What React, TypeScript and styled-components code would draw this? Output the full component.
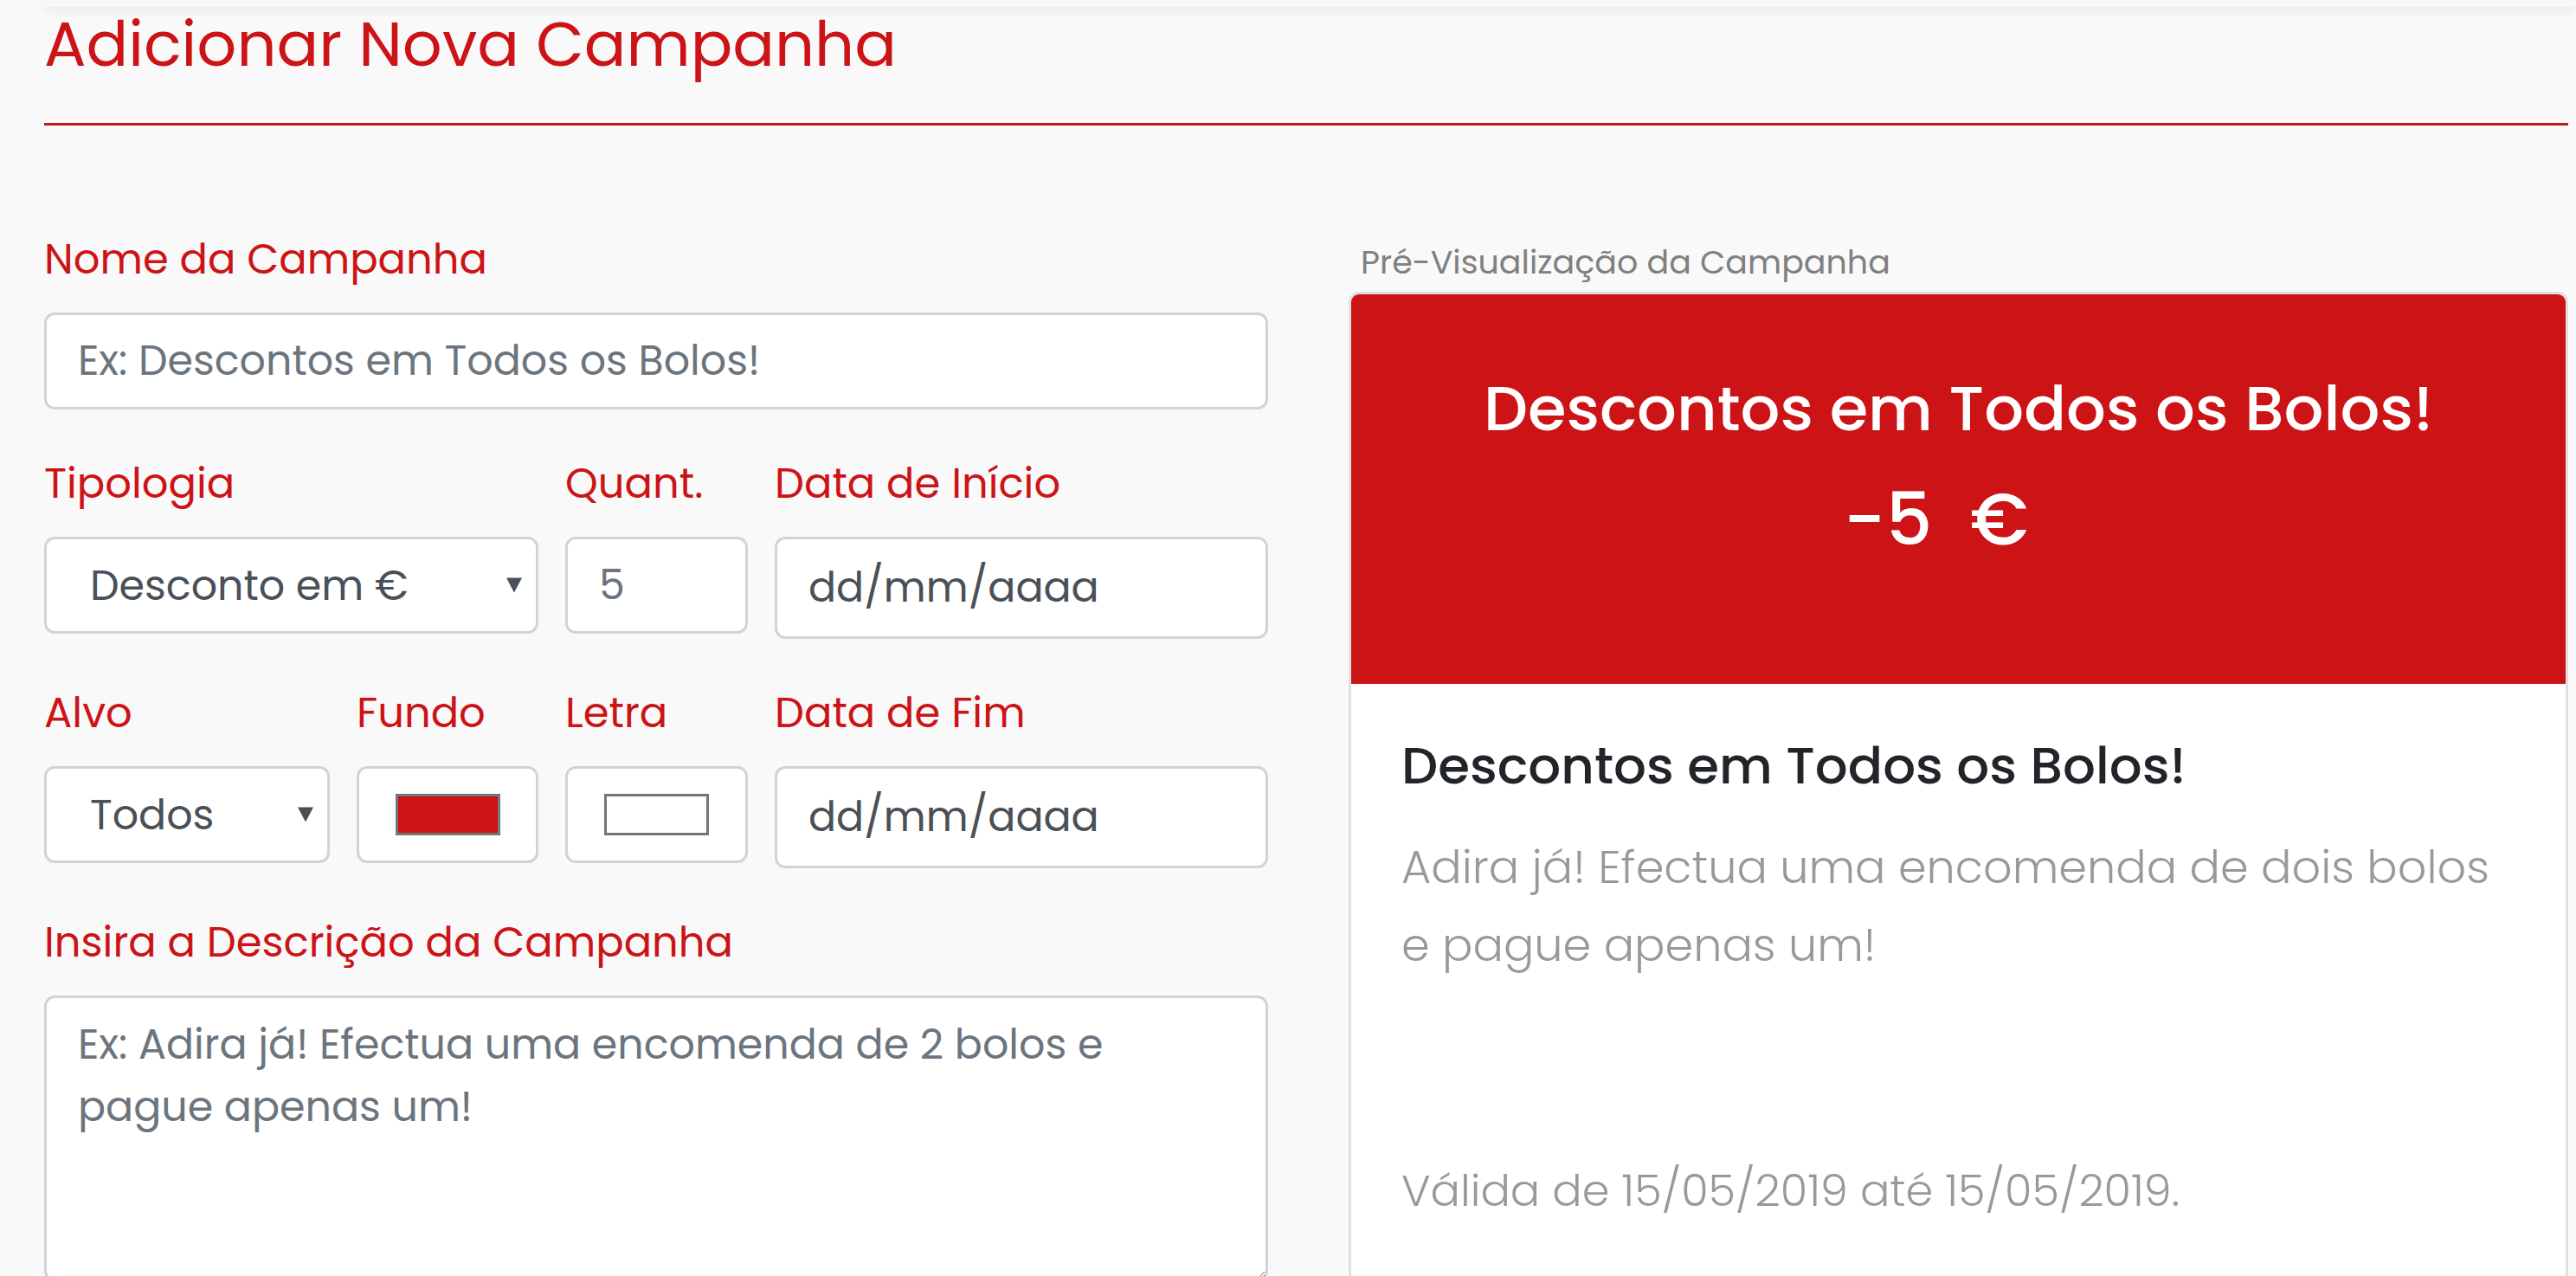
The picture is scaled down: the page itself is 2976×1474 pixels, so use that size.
import React from "react";
import styled, { createGlobalStyle, css } from "styled-components";

const RED = "#cc1316";
const FONT = `"Poppins", Inter, "Noto Sans", sans-serif`;

const GlobalStyle = createGlobalStyle`
  html, body { margin: 0; padding: 0; }
  body { background: #f9f9f9; font-family: ${FONT}; }
  *, *::before, *::after { box-sizing: border-box; }
`;

const Page = styled.div`
  padding-left: 51px;
  min-height: 1474px;
  overflow: hidden;
`;

const TopBar = styled.div`
  height: 8px;
  background: #f7f8fa;
  box-shadow: 0 4px 12px rgba(0, 0, 0, 0.08);
`;

const Content = styled.main`
  padding-right: 9px;
`;

const Title = styled.h1`
  margin: 0;
  font-size: 72px;
  line-height: 86px;
  font-weight: 400;
  color: ${RED};
`;

const Rule = styled.hr`
  margin: 48px 0 0;
  border: 0;
  height: 3px;
  background: #c41417;
`;

const Columns = styled.div`
  display: grid;
  grid-template-columns: 1414px 1fr;
  column-gap: 93px;
  align-items: start;
`;

const FormColumn = styled.form`
  padding-top: 127px;
  display: flex;
  flex-direction: column;
  gap: 58px;
`;

const Field = styled.div`
  display: flex;
  flex-direction: column;
  min-width: 0;
`;

const FieldRow = styled.div<{ $cols: string }>`
  display: grid;
  grid-template-columns: ${(p) => p.$cols};
  column-gap: 31px;
  align-items: start;
`;

const Label = styled.label`
  display: block;
  font-size: 48px;
  line-height: 56px;
  color: ${RED};
  margin-bottom: 33px;
  white-space: nowrap;
`;

const controlBase = css`
  display: block;
  width: 100%;
  background: #fff;
  border: 3px solid #ced4da;
  border-radius: 12px;
  font-family: ${FONT};
  font-size: 47.5px;
  color: #495057;
  outline: none;
  margin: 0;
`;

const TextInput = styled.input<{ $h?: number; $ph?: string }>`
  ${controlBase};
  height: ${(p) => p.$h ?? 112}px;
  padding: 0 36px;
  &::placeholder {
    color: ${(p) => p.$ph ?? "#6c757d"};
    opacity: 1;
  }
`;

const SelectWrap = styled.div`
  position: relative;
`;

const Select = styled.select`
  ${controlBase};
  height: 112px;
  padding: 0 60px 0 50px;
  appearance: none;
  -webkit-appearance: none;
`;

const Arrow = styled.span`
  position: absolute;
  right: 19px;
  top: 50%;
  transform: translateY(-50%);
  width: 0;
  height: 0;
  border-left: 9px solid transparent;
  border-right: 9px solid transparent;
  border-top: 17px solid #495057;
  pointer-events: none;
`;

const ColorBox = styled.div`
  height: 112px;
  background: #fff;
  border: 3px solid #ced4da;
  border-radius: 12px;
  display: flex;
  align-items: center;
  justify-content: center;
`;

const Swatch = styled.span<{ $color: string }>`
  width: 121px;
  height: 48px;
  border: 3px solid #767676;
  background: ${(p) => p.$color};
`;

const TextArea = styled.textarea`
  ${controlBase};
  height: 330px;
  padding: 18px 36px;
  line-height: 72px;
  resize: vertical;
  &::placeholder {
    color: #6c757d;
    opacity: 1;
  }
`;

const PreviewColumn = styled.section`
  padding-top: 134px;
`;

const PreviewLabel = styled.div`
  font-size: 38px;
  line-height: 48px;
  color: #808080;
  margin: 0 0 10px 14px;
`;

const Card = styled.div`
  background: #fff;
  border: 3px solid #e0e0e0;
  border-radius: 12px;
  overflow: hidden;
`;

const CardHeader = styled.div<{ $bg: string; $fg: string }>`
  height: 450px;
  padding-top: 90px;
  background: ${(p) => p.$bg};
  color: ${(p) => p.$fg};
  text-align: center;
`;

const HeaderTitle = styled.h3`
  margin: 0;
  font-size: 72px;
  line-height: 84px;
  font-weight: 500;
`;

const HeaderValue = styled.div`
  margin-top: 36px;
  padding-right: 52px;
  font-size: 84px;
  line-height: 100px;
  font-weight: 500;
  white-space: pre;
`;

const CardBody = styled.div`
  padding: 59px 60px 60px 58px;
`;

const BodyTitle = styled.h5`
  margin: 0 0 36px;
  font-size: 59.5px;
  line-height: 72px;
  font-weight: 500;
  color: #212529;
`;

const BodyText = styled.p<{ $size: number; $minH?: number }>`
  margin: 0;
  font-size: ${(p) => p.$size}px;
  line-height: 90px;
  font-weight: 300;
  color: #999999;
  min-height: ${(p) => p.$minH ?? 0}px;
`;

export default function App() {
  return (
    <>
      <GlobalStyle />
      <Page>
        <TopBar />
        <Content>
          <Title>Adicionar Nova Campanha</Title>
          <Rule />
          <Columns>
            <FormColumn onSubmit={(e) => e.preventDefault()}>
              <Field>
                <Label>Nome da Campanha</Label>
                <TextInput type="text" placeholder="Ex: Descontos em Todos os Bolos!" />
              </Field>

              <FieldRow $cols="571px 211px 1fr">
                <Field>
                  <Label>Tipologia</Label>
                  <SelectWrap>
                    <Select defaultValue="eur">
                      <option value="eur">Desconto em €</option>
                      <option value="pct">Desconto em %</option>
                    </Select>
                    <Arrow />
                  </SelectWrap>
                </Field>
                <Field>
                  <Label>Quant.</Label>
                  <TextInput type="text" placeholder="5" />
                </Field>
                <Field>
                  <Label>Data de Início</Label>
                  <TextInput type="text" placeholder="dd/mm/aaaa" $h={118} $ph="#495057" />
                </Field>
              </FieldRow>

              <FieldRow $cols="330px 210px 211px 1fr">
                <Field>
                  <Label>Alvo</Label>
                  <SelectWrap>
                    <Select defaultValue="todos">
                      <option value="todos">Todos</option>
                      <option value="clientes">Clientes</option>
                    </Select>
                    <Arrow />
                  </SelectWrap>
                </Field>
                <Field>
                  <Label>Fundo</Label>
                  <ColorBox>
                    <Swatch $color={RED} />
                  </ColorBox>
                </Field>
                <Field>
                  <Label>Letra</Label>
                  <ColorBox>
                    <Swatch $color="#ffffff" />
                  </ColorBox>
                </Field>
                <Field>
                  <Label>Data de Fim</Label>
                  <TextInput type="text" placeholder="dd/mm/aaaa" $h={118} $ph="#495057" />
                </Field>
              </FieldRow>

              <Field>
                <Label>Insira a Descrição da Campanha</Label>
                <TextArea placeholder="Ex: Adira já! Efectua uma encomenda de 2 bolos e pague apenas um!" />
              </Field>
            </FormColumn>

            <PreviewColumn>
              <PreviewLabel>Pré-Visualização da Campanha</PreviewLabel>
              <Card>
                <CardHeader $bg={RED} $fg="#ffffff">
                  <HeaderTitle>Descontos em Todos os Bolos!</HeaderTitle>
                  <HeaderValue>{"-5\u00a0\u00a0€"}</HeaderValue>
                </CardHeader>
                <CardBody>
                  <BodyTitle>Descontos em Todos os Bolos!</BodyTitle>
                  <BodyText $size={52.5} $minH={373}>
                    Adira já! Efectua uma encomenda de dois bolos e pague apenas um!
                  </BodyText>
                  <BodyText $size={51}>Válida de 15/05/2019 até 15/05/2019.</BodyText>
                </CardBody>
              </Card>
            </PreviewColumn>
          </Columns>
        </Content>
      </Page>
    </>
  );
}
